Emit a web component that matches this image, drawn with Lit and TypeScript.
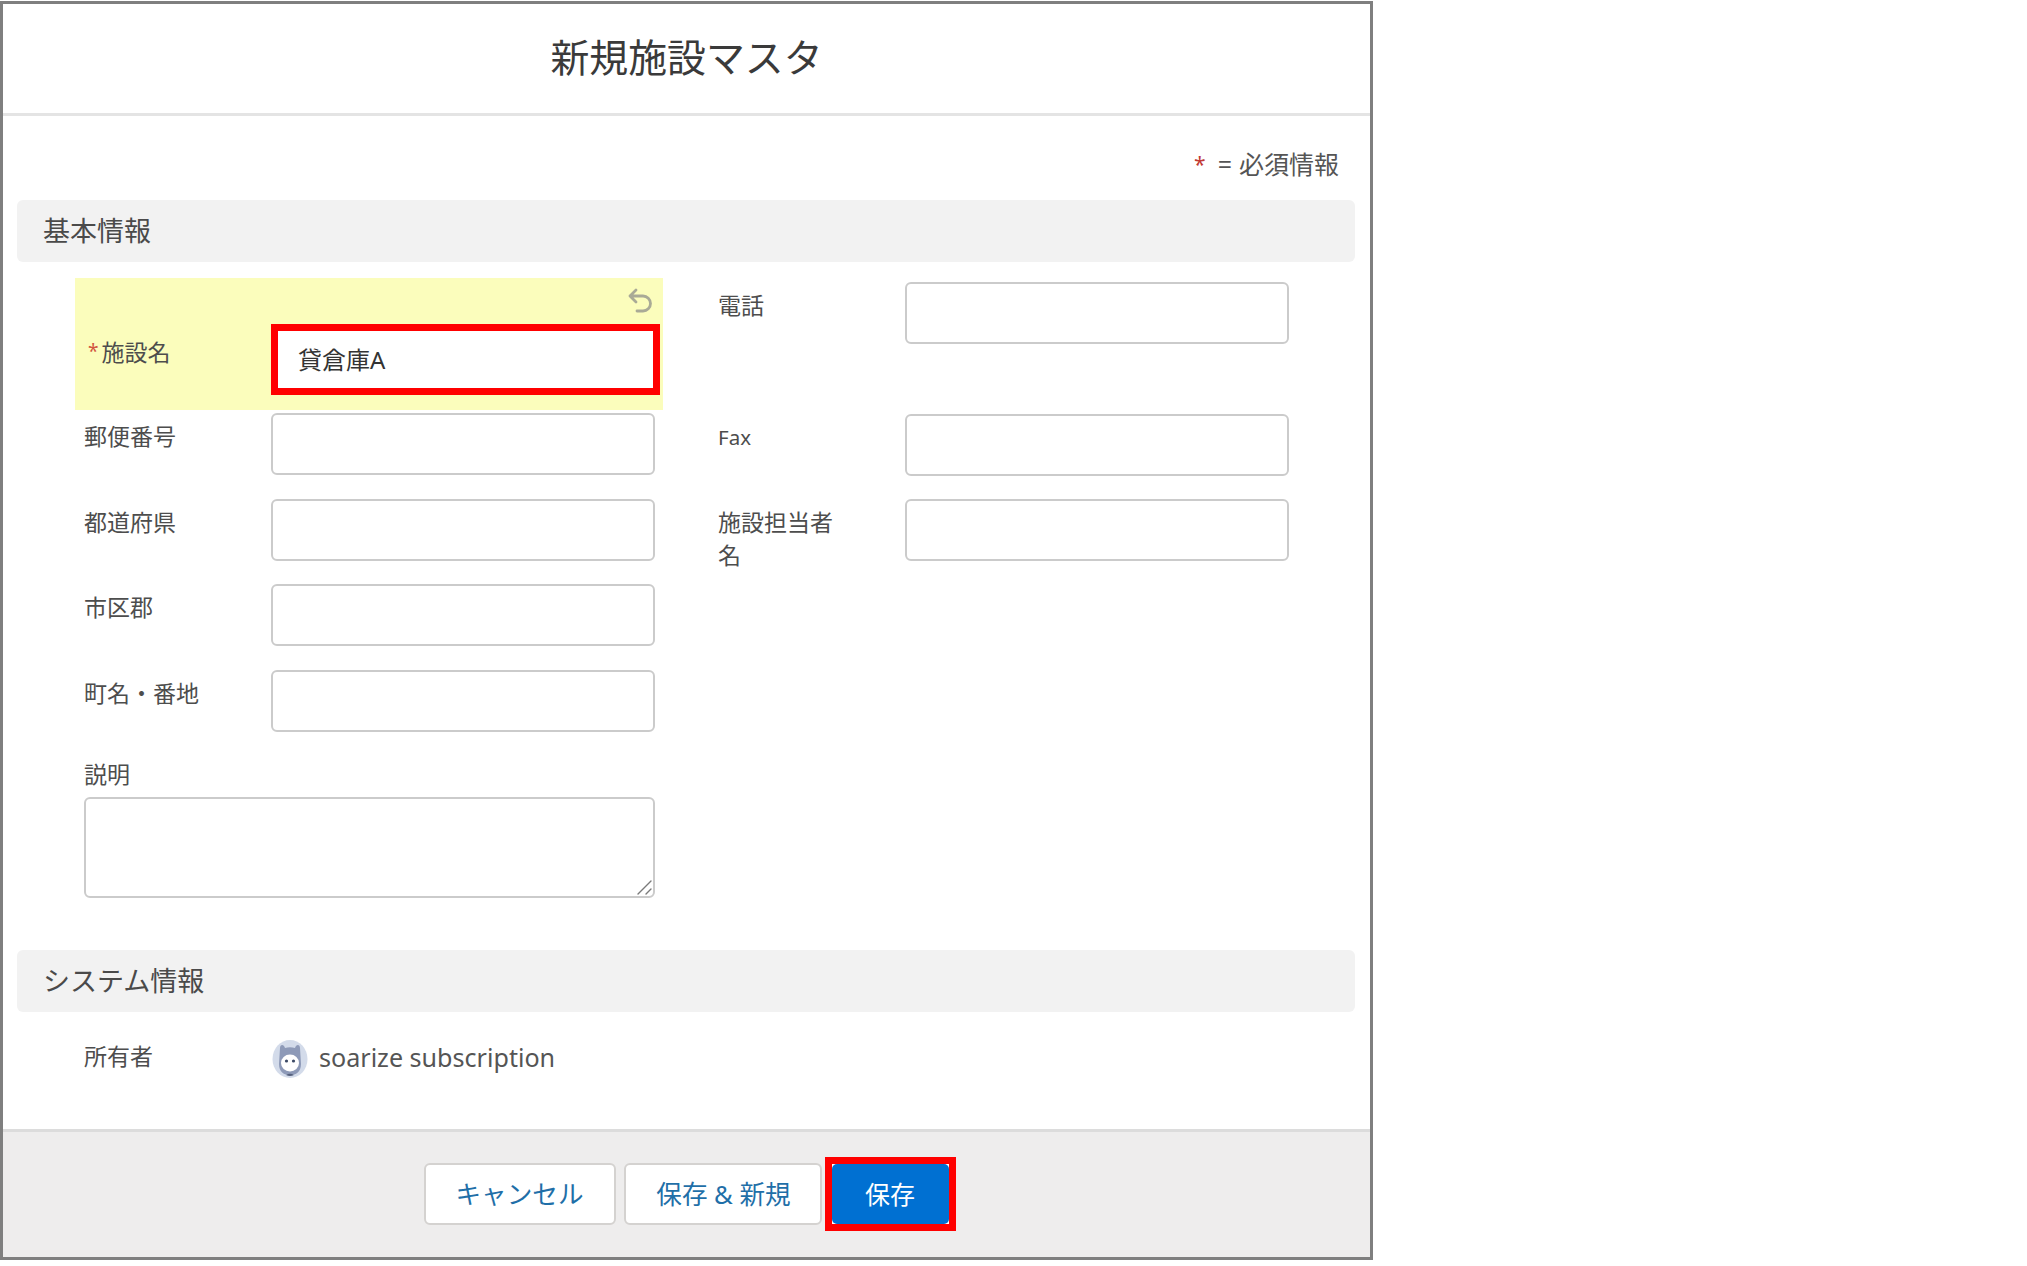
import { LitElement, html, css } from "lit";
import { customElement } from "lit/decorators.js";

@customElement("app-root")
export class AppRoot extends LitElement {
  static styles = css`
    :host { display: block; height: 1266px; background: #fff; padding-top: 1px; box-sizing: border-box;
      font-family: "Noto Sans", "Noto Sans CJK JP", sans-serif; color: #444; }
    .modal { width: 1373px; height: 1259px; box-sizing: border-box; border: 3px solid #7f7f7f; display: flex; flex-direction: column; background: #fff; }
    .head { flex: none; border-bottom: 3px solid #e4e4e4; box-sizing: border-box; height: 112px; display: flex; align-items: center; justify-content: center; font-size: 38.9px; color: #3a3a3a; line-height: 1; padding-bottom: 3px; }
    .body { flex: 1; padding: 0 15px 0 14px; display: flex; flex-direction: column; min-height: 0; }
    .note { height: 84px; flex: none; box-sizing: border-box; padding: 33px 16px 0 0; display: flex; justify-content: flex-end; align-items: flex-start; font-size: 25px; line-height: 30px; color: #555; }
    .note .star { color: #c23934; font-size: 21px; margin-right: 12px; }
    .note .eq { margin-right: 7px; }
    .section { height: 62px; flex: none; border-radius: 6px; background: #f2f2f2; display: flex; align-items: center; box-sizing: border-box; padding: 0 0 3px 26px; font-size: 27px; color: #4a4a4a; }
    .cols { display: flex; margin: 16px 0 0 58px; }
    .left { width: 588px; flex: none; display: flex; flex-direction: column; }
    .right { margin-left: 55px; padding-top: 4px; display: flex; flex-direction: column; }
    .yellow { height: 132px; box-sizing: border-box; background: #fbfdbc; padding: 10px 10px 0 13px; display: flex; flex-direction: column; margin-bottom: 3px; }
    .undo { height: 25px; align-self: flex-end; flex: none; display: block; }
    .yrow { display: flex; margin-top: 11px; margin-right: -7px; }
    .yrow .label { width: 183px; padding-top: 13px; }
    .req { color: #d2553f; font-size: 19px; line-height: 20px; margin-right: 3px; vertical-align: 3px; }
    .red { width: 389px; height: 71px; box-sizing: border-box; border: 7px solid #f00; background: #fff; padding: 0 0 2px 20px; display: flex; align-items: center; font-size: 24px; color: #333; }
    .rows { display: flex; flex-direction: column; gap: 23.5px; padding: 0 8px 0 9px; }
    .row { display: flex; }
    .label { font-size: 23px; line-height: 30px; color: #4d4d4d; }
    .row .label { width: 187px; flex: none; padding-top: 8px; box-sizing: border-box; }
    .right .row .label { padding-right: 68px; line-height: 33px; padding-top: 7px; }
    .right .row .latin { font-size: 20.5px; }
    .input { height: 62px; box-sizing: border-box; border: 2px solid #cbcbcb; border-radius: 6px; background: #fff; width: 384px; flex: none; }
    .gap-lg { margin-top: 70px; }
    .gap-sm { margin-top: 22.5px; }
    .desc { padding: 28.5px 8px 0 9px; display: flex; flex-direction: column; }
    .desc .label { margin-top: -1px; margin-bottom: 8px; }
    .ta { position: relative; width: 571px; }
    textarea { display: block; width: 571px; height: 101px; box-sizing: border-box; border: 2px solid #cbcbcb; border-radius: 6px; background: #fff; margin: 0; padding: 0; outline: none; resize: none; }
    .grip { position: absolute; right: 3px; bottom: 3px; display: block; }
    .section.sys { margin-top: 52px; }
    .owner { display: flex; margin: 29px 0 0 67px; align-items: flex-start; }
    .owner .label { width: 188px; flex: none; }
    .owner svg { display: block; flex: none; margin-top: -1px; }
    .name { margin: 1px 0 0 11px; font-size: 25.1px; line-height: 30px; color: #555; }
    .foot { height: 128px; box-sizing: border-box; flex: none; border-top: 3px solid #dcdcdc; background: #eeeded; display: flex; align-items: center; justify-content: center; padding: 0 0 1px 6px; }
    .btn { height: 62px; box-sizing: border-box; border: 2px solid #d4d2d0; border-radius: 6px; background: #fff; color: #1f6fa8; font-size: 25.6px; display: flex; align-items: center; justify-content: center; padding-bottom: 2px; }
    .cancel { width: 192px; }
    .savenew { width: 198px; margin-left: 8px; padding-left: 2px; }
    .redbox { border: 7px solid #f00; margin-left: 3px; width: 131px; box-sizing: border-box; background: #fff; }
    .primary { width: 117px; height: 60px; background: #0070d2; border: none; border-radius: 5px; color: #fff; font-size: 25px; }
  `;

  private field(label: string) {
    return html`<div class="row"><div class="label">${label}</div><div class="input"></div></div>`;
  }

  render() {
    return html`
      <div class="modal">
        <div class="head">新規施設マスタ</div>
        <div class="body">
          <div class="note"><span class="star">*</span><span class="eq">=</span><span>必須情報</span></div>
          <div class="section">基本情報</div>
          <div class="cols">
            <div class="left">
              <div class="yellow">
                <svg class="undo" width="25" height="25" viewBox="0 0 25 25" fill="none" stroke="#a9aa96" stroke-width="2.8" stroke-linecap="round" stroke-linejoin="round">
                  <path d="M8 2 L2 8 L8 14 M2 8 H15 a7.5 7.5 0 0 1 0 15 H9" />
                </svg>
                <div class="yrow">
                  <div class="label"><span class="req">*</span>施設名</div>
                  <div class="red">貸倉庫A</div>
                </div>
              </div>
              <div class="rows">
                ${this.field("郵便番号")}
                ${this.field("都道府県")}
                ${this.field("市区郡")}
                ${this.field("町名・番地")}
              </div>
              <div class="desc">
                <div class="label">説明</div>
                <div class="ta">
                  <textarea></textarea>
                  <svg class="grip" width="15" height="15" viewBox="0 0 15 15" fill="none" stroke="#7a7a7a" stroke-width="1.4" stroke-linecap="round">
                    <path d="M1 14 L14 1 M9 14 L14 9" />
                  </svg>
                </div>
              </div>
            </div>
            <div class="right">
              <div class="row"><div class="label">電話</div><div class="input"></div></div>
              <div class="row gap-lg"><div class="label latin">Fax</div><div class="input"></div></div>
              <div class="row gap-sm"><div class="label">施設担当者名</div><div class="input"></div></div>
            </div>
          </div>
          <div class="section sys">システム情報</div>
          <div class="owner">
            <div class="label">所有者</div>
            <svg width="36" height="38" viewBox="0 0 36 38">
              <ellipse cx="18" cy="19" rx="17.5" ry="19" fill="#d3dbea" />
              <path d="M8 8 C8 4 12 4 13 8 C16 7 20 7 23 8 C24 4 28 4 28 8 L29 24 C29 32 24 35 18 35 C12 35 7 32 7 24 Z" fill="#8e9ab8" />
              <ellipse cx="18" cy="23" rx="9" ry="8.5" fill="#fff" />
              <circle cx="14.5" cy="21" r="1.6" fill="#3d4a66" />
              <circle cx="21.5" cy="21" r="1.6" fill="#3d4a66" />
              <path d="M14 35 Q18 37 22 35 Q18 32.5 14 35 Z" fill="#55617d" />
            </svg>
            <div class="name">soarize subscription</div>
          </div>
        </div>
        <div class="foot">
          <div class="btn cancel">キャンセル</div>
          <div class="btn savenew">保存 &amp; 新規</div>
          <div class="redbox"><div class="btn primary">保存</div></div>
        </div>
      </div>
    `;
  }
}
